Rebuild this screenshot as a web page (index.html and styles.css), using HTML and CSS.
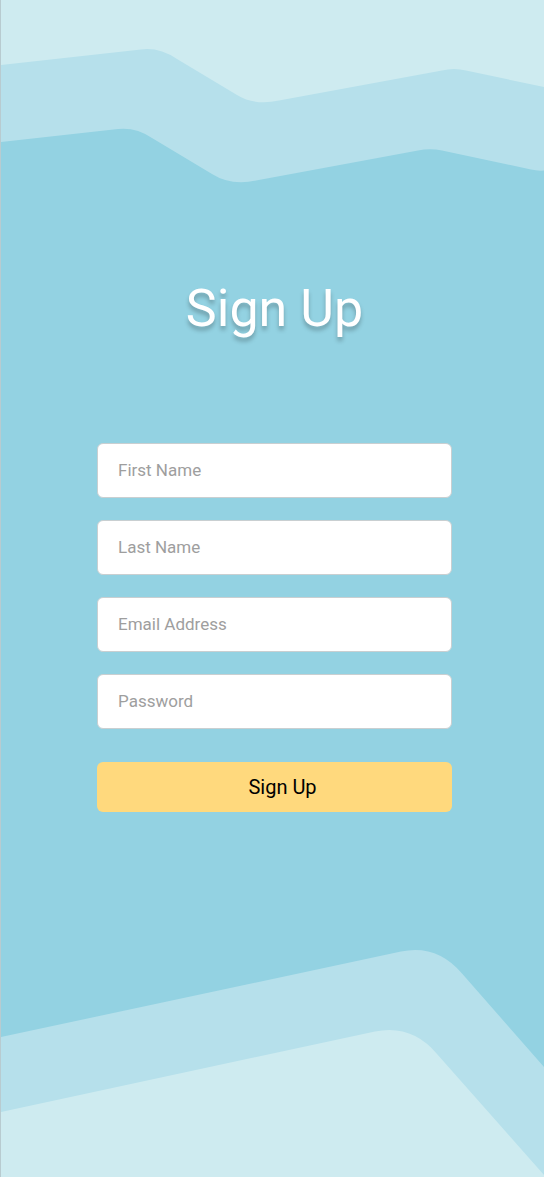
FILE: index.html
```html
<!DOCTYPE html>
<html lang="en">
<head>
  <meta charset="utf-8">
  <meta name="viewport" content="width=device-width, initial-scale=1">
  <title>Sign Up</title>
  <link rel="stylesheet" href="styles.css">
</head>
<body>
  <div class="page">
    <svg class="wave" viewBox="0 0 543 184" preserveAspectRatio="none" aria-hidden="true">
      <path class="wave-mid" d="M0 0H543V170.500Q536 171 530 169.500L441 150.500Q429 148 417 150.500L255 180.500Q230 186 211 174L151 138Q135 127 117 129L0 142Z"/>
      <path class="wave-light" d="M0 0H543V87L465 70.500Q453 67.500 441 70.500L278 100.500Q254 106 236 95L176 59Q158 47 140 49.500L0 65Z"/>
    </svg>

    <main class="content">
      <h1 class="title">Sign Up</h1>
      <form class="form">
        <input class="field" type="text" placeholder="First Name" aria-label="First Name">
        <input class="field" type="text" placeholder="Last Name" aria-label="Last Name">
        <input class="field" type="email" placeholder="Email Address" aria-label="Email Address">
        <input class="field" type="password" placeholder="Password" aria-label="Password">
        <button class="submit" type="submit">Sign Up</button>
      </form>
    </main>

    <svg class="wave" viewBox="0 0 543 228" preserveAspectRatio="none" aria-hidden="true">
      <path class="wave-mid" d="M0 88L400 2.500Q436 -5 461 24.500L543 118V228H0Z"/>
      <path class="wave-light" d="M0 163L374 82.500Q411 75 436 105L543 226V228H0Z"/>
    </svg>
  </div>
</body>
</html>
```
FILE: styles.css
```css
* {
  box-sizing: border-box;
}

body {
  margin: 0;
  font-family: Roboto, "Liberation Sans", sans-serif;
}

.page {
  display: flex;
  flex-direction: column;
  min-height: 100vh;
  border-left: 1px solid #b8cbd0;
  background: #93d2e2;
}

.wave {
  display: block;
  flex: none;
  width: 100%;
}

.wave-mid {
  fill: #b6e0eb;
}

.wave-light {
  fill: #ceebf0;
}

.content {
  flex: 1;
  padding: 93px 92px 48px 96px;
}

.title {
  margin: 0 0 102px;
  color: #fff;
  font-size: 52px;
  font-weight: 400;
  line-height: 64px;
  text-align: center;
  text-shadow: 0 4px 4px rgba(0, 0, 0, 0.25);
}

.form {
  display: flex;
  flex-direction: column;
  gap: 22px;
}

.field {
  width: 100%;
  height: 55px;
  padding: 0 20px 2px;
  border: 1px solid #c9cfd1;
  border-radius: 6px;
  background: #fff;
  color: #333;
  font: 400 17px/24px Roboto, "Liberation Sans", sans-serif;
}

.field::placeholder {
  color: #9e9e9e;
  opacity: 1;
}

.submit {
  height: 50px;
  margin-top: 11px;
  padding: 0 0 0 16px;
  border: 0;
  border-radius: 6px;
  background: #ffd97d;
  color: #000;
  font: 400 20px/24px Roboto, "Liberation Sans", sans-serif;
}
```
